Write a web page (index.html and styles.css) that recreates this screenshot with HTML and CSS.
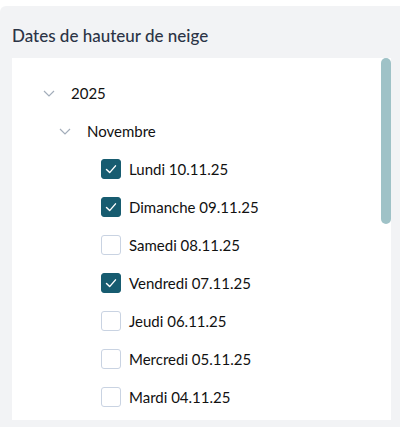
FILE: index.html
```html
<!DOCTYPE html>
<html>
<head>
  <title>Dates de hauteur de neige</title>
  <link rel="stylesheet" href="styles.css">
</head>
<body>

<div class="panel">
  <h3 class="title">Dates de hauteur de neige</h3>

  <div class="tree">
    <div class="row lvl0">
      <svg class="chev" viewBox="0 0 12 7"><polyline points="1,1 6,6 11,1"/></svg>
      <span>2025</span>
    </div>
    <div class="row lvl1">
      <svg class="chev" viewBox="0 0 12 7"><polyline points="1,1 6,6 11,1"/></svg>
      <span>Novembre</span>
    </div>
    <div id="days"></div>
    <div class="thumb"></div>
  </div>
</div>

<script>
let days = [
  ["Lundi 10.11.25", true],
  ["Dimanche 09.11.25", true],
  ["Samedi 08.11.25", false],
  ["Vendredi 07.11.25", true],
  ["Jeudi 06.11.25", false],
  ["Mercredi 05.11.25", false],
  ["Mardi 04.11.25", false]
];
let list = document.getElementById("days");
days.forEach(d=>{
  let row = document.createElement("div");
  row.className="row lvl2";
  row.innerHTML='<span class="box'+(d[1]?' on':'')+'"><svg viewBox="0 0 20 20"><polyline points="5,10.5 8.5,14 15,6.5"/></svg></span><span>'+d[0]+'</span>';
  list.appendChild(row);
});
</script>

</body>
</html>
```

FILE: styles.css
```css
body { margin: 0; background: #fff; font-family: Lato, "Noto Sans", sans-serif; }
.panel { margin-top: 6px; background: #f2f3f5; border-radius: 6px 0 0 0; padding: 0 9px 7px 12px; }
.title { margin: 0; padding: 19px 0 11px; font-size: 17px; line-height: 22px; font-weight: 500; color: #2b3445; }
.tree { position: relative; height: 362px; overflow: hidden; background: #fff; padding-top: 16px; box-sizing: border-box; }
.thumb { position: absolute; top: 0; right: 0; width: 10px; height: 166px; background: #9fc2c7; border-radius: 5px; }
.row { display: flex; align-items: center; height: 38px; font-size: 15px; color: #111; }
.lvl0 { padding-left: 31px; }
.lvl1 { padding-left: 47px; }
.lvl2 { padding-left: 89px; }
.chev { width: 12px; height: 7px; margin-right: 16px; fill: none; stroke: #a3adba; stroke-width: 1.2; }
.box { width: 18px; height: 18px; border: 1px solid #c9d3e2; border-radius: 3px; margin-right: 8px; display: flex; }
.box svg { width: 100%; height: 100%; fill: none; stroke: #fff; stroke-width: 1.6; stroke-linecap: round; stroke-linejoin: round; visibility: hidden; }
.box.on { background: #175c70; border-color: #175c70; }
.box.on svg { visibility: visible; }
```
